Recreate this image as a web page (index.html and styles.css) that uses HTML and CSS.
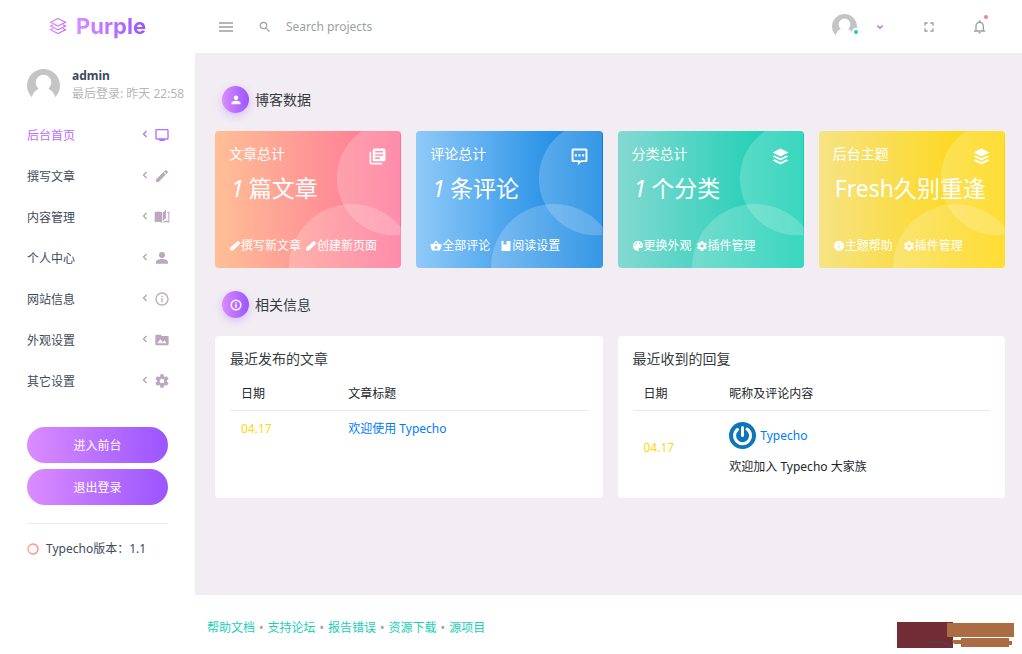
FILE: index.html
```html
<!DOCTYPE html>
<html lang="zh-CN">
<head>
<meta charset="utf-8">
<meta name="viewport" content="width=device-width, initial-scale=1">
<title>Purple</title>
<link rel="stylesheet" href="styles.css">
</head>
<body>
<svg class="sprite" aria-hidden="true">
  <defs>
    <linearGradient id="purple" x1="0" x2="1" y1="0" y2="0"><stop offset="0" stop-color="#da8cff"/><stop offset="1" stop-color="#b768ff"/></linearGradient>
    <linearGradient id="peach" x1="0" x2="1" y1="0" y2="0"><stop offset="0" stop-color="#ffa585"/><stop offset="1" stop-color="#fe7c96"/></linearGradient>
  </defs>
  <symbol id="i-pencil" viewBox="0 0 24 24"><path d="M20.71,7.04C21.1,6.65 21.1,6 20.71,5.63L18.37,3.29C18,2.9 17.35,2.9 16.96,3.29L15.12,5.12L18.87,8.87M3,17.25V21H6.75L17.81,9.93L14.06,6.18L3,17.25Z"/></symbol>
  <symbol id="i-pencil-bold" viewBox="0 0 24 24"><path d="M17,2.5Q18,1.5 19.5,3L21.5,5Q23,6.5 22,7.5L8,21H2V15.5Z"/></symbol>
  <symbol id="i-account" viewBox="0 0 24 24"><path d="M12,3A4.5,4.5 0 0,1 16.5,7.5A4.5,4.5 0 0,1 12,12A4.5,4.5 0 0,1 7.5,7.5A4.5,4.5 0 0,1 12,3M12,13.5C17,13.5 21,15.5 21,18V20.5H3V18C3,15.5 7,13.5 12,13.5Z"/></symbol>
  <symbol id="i-info" viewBox="0 0 24 24"><path d="M11,9H13V7H11M12,20C7.59,20 4,16.41 4,12C4,7.59 7.59,4 12,4C16.41,4 20,7.59 20,12C20,16.41 16.41,20 12,20M12,2A10,10 0 0,0 2,12A10,10 0 0,0 12,22A10,10 0 0,0 22,12A10,10 0 0,0 12,2M11,17H13V11H11V17Z"/></symbol>
  <symbol id="i-info-bold" viewBox="0 0 24 24"><path fill-rule="evenodd" d="M12,1A11,11 0 0,0 12,23A11,11 0 0,0 12,1ZM12,4A8,8 0 0,1 12,20A8,8 0 0,1 12,4ZM10.5,6.5H13.5V9H10.5ZM10.5,10.5H13.5V17.5H10.5Z"/></symbol>
  <symbol id="i-info-solid" viewBox="0 0 24 24"><path d="M13,9H11V7H13M13,17H11V11H13M12,2A10,10 0 0,0 2,12A10,10 0 0,0 12,22A10,10 0 0,0 22,12A10,10 0 0,0 12,2Z"/></symbol>
  <symbol id="i-gear" viewBox="0 0 24 24"><path d="M12,15.5A3.5,3.5 0 0,1 8.5,12A3.5,3.5 0 0,1 12,8.5A3.5,3.5 0 0,1 15.5,12A3.5,3.5 0 0,1 12,15.5M19.43,12.97C19.47,12.65 19.5,12.33 19.5,12C19.5,11.67 19.47,11.34 19.43,11L21.54,9.37C21.73,9.22 21.78,8.95 21.66,8.73L19.66,5.27C19.54,5.05 19.27,4.96 19.05,5.05L16.56,6.05C16.04,5.66 15.5,5.32 14.87,5.07L14.5,2.42C14.46,2.18 14.25,2 14,2H10C9.75,2 9.54,2.18 9.5,2.42L9.13,5.07C8.5,5.32 7.96,5.66 7.44,6.05L4.95,5.05C4.73,4.96 4.46,5.05 4.34,5.27L2.34,8.73C2.21,8.95 2.27,9.22 2.46,9.37L4.57,11C4.53,11.34 4.5,11.67 4.5,12C4.5,12.33 4.53,12.65 4.57,12.97L2.46,14.63C2.27,14.78 2.21,15.05 2.34,15.27L4.34,18.73C4.46,18.95 4.73,19.03 4.95,18.95L7.44,17.94C7.96,18.34 8.5,18.68 9.13,18.93L9.5,21.58C9.54,21.82 9.75,22 10,22H14C14.25,22 14.46,21.82 14.5,21.58L14.87,18.93C15.5,18.67 16.04,18.34 16.56,17.94L19.05,18.95C19.27,19.03 19.54,18.95 19.66,18.73L21.66,15.27C21.78,15.05 21.73,14.78 21.54,14.63L19.43,12.97Z"/></symbol>
  <symbol id="i-screen" viewBox="0 0 24 24"><path d="M20,17H4V5H20M20,3H4C2.9,3 2,3.9 2,5V17A2,2 0 0,0 4,19H8V21H16V19H20A2,2 0 0,0 22,17V5C22,3.9 21.1,3 20,3Z"/></symbol>
  <symbol id="i-book" viewBox="0 0 24 24"><path d="M1,4.5C4.5,3.2 8.5,3.2 12,5V20.5C8.5,18.8 4.5,18.8 1,20V4.5ZM13,5.5L18,1V13.5L13,18V5.5ZM19.5,4H23V20.5C19.5,19 16,19 13,20.5V19.5C16,17.4 18.5,17.4 21.5,18V5.5H19.5V4Z"/></symbol>
  <symbol id="i-folder" viewBox="0 0 24 24"><path d="M5,17L9.5,11L13,15.5L15.5,12.5L19,17M20,6H12L10,4H4A2,2 0 0,0 2,6V18A2,2 0 0,0 4,20H20A2,2 0 0,0 22,18V8A2,2 0 0,0 20,6Z"/></symbol>
  <symbol id="i-left" viewBox="0 0 24 24"><path d="M15,6L9,12L15,18" fill="none" stroke="currentColor" stroke-width="2.6"/></symbol>
  <symbol id="i-down" viewBox="0 0 24 24"><path d="M6.5,9L12,14.5L17.5,9" fill="none" stroke="currentColor" stroke-width="2.6"/></symbol>
  <symbol id="i-search" viewBox="0 0 24 24"><path d="M9.5,3A6.5,6.5 0 0,1 16,9.5C16,11.11 15.41,12.59 14.44,13.73L14.71,14H15.5L20.5,19L19,20.5L14,15.5V14.71L13.73,14.44C12.59,15.41 11.11,16 9.5,16A6.5,6.5 0 0,1 3,9.5A6.5,6.5 0 0,1 9.5,3M9.5,5C7,5 5,7 5,9.5C5,12 7,14 9.5,14C12,14 14,12 14,9.5C14,7 12,5 9.5,5Z"/></symbol>
  <symbol id="i-full" viewBox="0 0 24 24"><path d="M5,5H10V7H7V10H5V5M14,5H19V10H17V7H14V5M17,14H19V19H14V17H17V14M10,17V19H5V14H7V17H10Z"/></symbol>
  <symbol id="i-bell" viewBox="0 0 24 24"><path d="M16,17H7V10.5C7,8 9,6 11.5,6C14,6 16,8 16,10.5M18,16V10.5C18,7.43 15.86,4.86 13,4.18V3.5A1.5,1.5 0 0,0 10,3.5V4.18C7.13,4.86 5,7.43 5,10.5V16L3,18V19H20V18M11.5,22A2,2 0 0,0 13.5,20H9.5A2,2 0 0,0 11.5,22Z"/></symbol>
  <symbol id="i-stack" viewBox="0 0 24 24"><path d="M12,2L22,7L12,12L2,7ZM4.5,10.6L12,14.3L19.5,10.6L22,12L12,17L2,12ZM4.5,15.6L12,19.3L19.5,15.6L22,17L12,22L2,17Z"/></symbol>
  <symbol id="i-docs" viewBox="0 0 24 24"><path d="M20,2H8A2,2 0 0,0 6,4V16A2,2 0 0,0 8,18H20A2,2 0 0,0 22,16V4A2,2 0 0,0 20,2M19,7H9V5H19M15,15H9V13H15M19,11H9V9H19M4,6H2V20A2,2 0 0,0 4,22H18V20H4V6Z"/></symbol>
  <symbol id="i-chat" viewBox="0 0 24 24"><path fill-rule="evenodd" d="M4,2H20A2,2 0 0,1 22,4V17A2,2 0 0,1 20,19H14L10,23V19H4A2,2 0 0,1 2,17V4A2,2 0 0,1 4,2M4.4,4.4V16.6H12.4V18L14,16.6H19.6V4.4ZM6,9.3H8.6V12H6ZM10.7,9.3H13.3V12H10.7ZM15.4,9.3H18V12H15.4Z"/></symbol>
  <symbol id="i-basket" viewBox="0 0 24 24"><path fill-rule="evenodd" d="M12,1L18,8H23V11L20,21H4L1,11V8H6ZM12,4.5L9,8H15ZM12,12A3,3 0 0,0 12,18A3,3 0 0,0 12,12Z"/></symbol>
  <symbol id="i-notebook" viewBox="0 0 24 24"><path d="M3,2H7V10L10,8L13,10V2H21V22H3Z"/></symbol>
  <symbol id="i-palette" viewBox="0 0 24 24"><path fill-rule="evenodd" d="M12,2A10,10 0 0,0 2,12A10,10 0 0,0 12,22C14,22 14,20 13.3,18.8C12.5,17.5 13,16 14.5,16H17A5,5 0 0,0 22,11C22,6 17.5,2 12,2ZM6,9A1.5,1.5 0 0,1 6,12A1.5,1.5 0 0,1 6,9ZM9,5A1.5,1.5 0 0,1 9,8A1.5,1.5 0 0,1 9,5ZM15,5A1.5,1.5 0 0,1 15,8A1.5,1.5 0 0,1 15,5ZM18,9A1.5,1.5 0 0,1 18,12A1.5,1.5 0 0,1 18,9Z"/></symbol>
  <symbol id="i-avatar" viewBox="0 0 34 34"><path fill="#c4c4c4" d="M5,29A17,17 0 1,1 29,29C28,25 26,22 22,20.5C24,18.5 25,16.5 25,14A8,8 0 0,0 9,14C9,16.5 10,18.5 12,20.5C8,22 6,25 5,29Z"/></symbol>
  <symbol id="i-rings" viewBox="0 0 112 137"><path d="M111,0V104A57,57 0 0,1 73,0Z"/><circle cx="63" cy="136" r="63"/></symbol>
</svg>

<div class="app">
  <header class="topbar">
    <a class="brand" href="#">
      <svg class="brand-icon line-art" viewBox="0 0 24 24" stroke="url(#purple)" stroke-width="1.5"><path d="M12,2L22,7L12,12L2,7ZM5.5,10.2L2,12L12,17L22,12L18.5,10.2M5.5,15.2L2,17L12,22L22,17L18.5,15.2"/></svg>
      <span class="brand-name">Purple</span>
    </a>
    <div class="tools">
      <button class="icon-btn" type="button" aria-label="菜单"><svg class="menu-icon" viewBox="0 0 14 10"><path d="M0,1H14M0,5H14M0,9H14" stroke="currentColor" stroke-width="1.4"/></svg></button>
      <label class="search"><svg class="icon-sm"><use href="#i-search"/></svg><input type="text" placeholder="Search projects" aria-label="Search projects"></label>
      <button class="icon-btn profile" type="button" aria-label="admin">
        <span class="profile-face"><svg class="avatar-sm"><use href="#i-avatar"/></svg><i class="online"></i></span>
        <svg class="chevron"><use href="#i-down"/></svg>
      </button>
      <button class="icon-btn" type="button" aria-label="全屏"><svg class="icon"><use href="#i-full"/></svg></button>
      <button class="icon-btn bell" type="button" aria-label="通知"><svg class="icon"><use href="#i-bell"/></svg><i class="unread"></i></button>
    </div>
  </header>

  <aside class="sidebar">
    <div class="user">
      <svg class="avatar"><use href="#i-avatar"/></svg>
      <div class="user-text"><strong>admin</strong><span>最后登录: 昨天 22:58</span></div>
    </div>
    <nav class="menu">
      <a class="active" href="#">后台首页<svg class="chevron"><use href="#i-left"/></svg><svg class="icon"><use href="#i-screen"/></svg></a>
      <a href="#">撰写文章<svg class="chevron"><use href="#i-left"/></svg><svg class="icon"><use href="#i-pencil"/></svg></a>
      <a href="#">内容管理<svg class="chevron"><use href="#i-left"/></svg><svg class="icon"><use href="#i-book"/></svg></a>
      <a href="#">个人中心<svg class="chevron"><use href="#i-left"/></svg><svg class="icon"><use href="#i-account"/></svg></a>
      <a href="#">网站信息<svg class="chevron"><use href="#i-left"/></svg><svg class="icon"><use href="#i-info"/></svg></a>
      <a href="#">外观设置<svg class="chevron"><use href="#i-left"/></svg><svg class="icon"><use href="#i-folder"/></svg></a>
      <a href="#">其它设置<svg class="chevron"><use href="#i-left"/></svg><svg class="icon"><use href="#i-gear"/></svg></a>
    </nav>
    <div class="actions">
      <button type="button">进入前台</button>
      <button type="button">退出登录</button>
    </div>
    <p class="version"><svg class="ring line-art" viewBox="0 0 12 12"><circle cx="6" cy="6" r="5" stroke="url(#peach)" stroke-width="1.3"/></svg>Typecho版本：1.1</p>
  </aside>

  <main class="content">
    <h2 class="section-title"><span class="badge"><svg><use href="#i-account"/></svg></span>博客数据</h2>
    <section class="stats">
      <article class="stat peach">
        <svg class="rings"><use href="#i-rings"/></svg>
        <h3>文章总计<svg><use href="#i-docs"/></svg></h3>
        <p class="value"><em>1</em>篇文章</p>
        <p class="links"><a href="#"><svg><use href="#i-pencil-bold"/></svg>撰写新文章</a><a href="#"><svg><use href="#i-pencil-bold"/></svg>创建新页面</a></p>
      </article>
      <article class="stat blue">
        <svg class="rings"><use href="#i-rings"/></svg>
        <h3>评论总计<svg><use href="#i-chat"/></svg></h3>
        <p class="value"><em>1</em>条评论</p>
        <p class="links wide"><a href="#"><svg><use href="#i-basket"/></svg>全部评论</a><a href="#"><svg><use href="#i-notebook"/></svg>阅读设置</a></p>
      </article>
      <article class="stat green">
        <svg class="rings"><use href="#i-rings"/></svg>
        <h3>分类总计<svg><use href="#i-stack"/></svg></h3>
        <p class="value"><em>1</em>个分类</p>
        <p class="links"><a href="#"><svg><use href="#i-palette"/></svg>更换外观</a><a href="#"><svg><use href="#i-gear"/></svg>插件管理</a></p>
      </article>
      <article class="stat yellow">
        <svg class="rings"><use href="#i-rings"/></svg>
        <h3>后台主题<svg><use href="#i-stack"/></svg></h3>
        <p class="value">Fresh久别重逢</p>
        <p class="links wide"><a href="#"><svg><use href="#i-info-solid"/></svg>主题帮助</a><a href="#"><svg><use href="#i-gear"/></svg>插件管理</a></p>
      </article>
    </section>

    <h2 class="section-title"><span class="badge"><svg><use href="#i-info-bold"/></svg></span>相关信息</h2>
    <section class="panels">
      <article class="panel">
        <h3>最近发布的文章</h3>
        <table>
          <thead><tr><th class="col-date">日期</th><th>文章标题</th></tr></thead>
          <tbody><tr><td class="date">04.17</td><td><a href="#">欢迎使用 Typecho</a></td></tr></tbody>
        </table>
      </article>
      <article class="panel">
        <h3>最近收到的回复</h3>
        <table>
          <thead><tr><th class="col-date-narrow">日期</th><th>昵称及评论内容</th></tr></thead>
          <tbody><tr><td class="date">04.17</td><td>
            <a class="author" href="#"><svg viewBox="0 0 27 27"><circle cx="13.5" cy="13.5" r="13.5" fill="#0d75b8"/><path d="M8.5,7.5A8,8 0 1,0 18,7" fill="none" stroke="#fff" stroke-width="3" stroke-linecap="round"/><path d="M13.5,5.5V13.5" stroke="#fff" stroke-width="3" stroke-linecap="round"/></svg>Typecho</a>
            <p class="reply">欢迎加入 Typecho 大家族</p>
          </td></tr></tbody>
        </table>
      </article>
    </section>
  </main>

  <footer class="footer">
    <p><a href="#">帮助文档</a><span>•</span><a href="#">支持论坛</a><span>•</span><a href="#">报告错误</a><span>•</span><a href="#">资源下载</a><span>•</span><a href="#">源项目</a></p>
    <svg class="mark" viewBox="0 0 117 26" aria-hidden="true"><path fill="#722c35" d="M0,0H56V26H0Z"/><path fill="#ab6c43" d="M50,1H117V15H50ZM64,16H112V19H115V23H112V25H64V22H57L55,18H64Z"/><path d="M32,21Q44,17 55,25" fill="none" stroke="#4b4458"/></svg>
  </footer>
</div>
</body>
</html>
```
FILE: styles.css
```css
* { box-sizing: border-box; }

body {
  margin: 0;
  background: #fff;
  color: #343a40;
  font: 12px/18px "Noto Sans", "Noto Sans CJK SC", sans-serif;
}

h2, h3, p { margin: 0; font-weight: 400; }
a { color: inherit; text-decoration: none; }
svg { flex: none; fill: currentColor; }
.line-art { fill: none; }
.sprite { position: absolute; width: 0; height: 0; }
.icon { width: 16px; height: 16px; }
.icon-sm { width: 14px; height: 14px; }
.chevron { width: 12px; height: 12px; }

.app {
  display: grid;
  grid-template: 53px 1fr 59px / 195px 1fr;
  min-height: 100vh;
}

/* Top bar */
.topbar { grid-column: 1 / 3; display: grid; grid-template-columns: subgrid; align-items: center; }
.brand { display: flex; align-items: center; justify-content: center; gap: 9px; padding-bottom: 1px; }
.brand-icon { width: 18px; height: 18px; }
.brand-name {
  font: 700 22px/32px Inter, sans-serif;
  background: linear-gradient(to right, #da8cff, #9a55ff);
  -webkit-background-clip: text;
  background-clip: text;
  color: transparent;
}
.tools { display: flex; align-items: center; padding: 0 34px 0 24px; color: #9c9fa6; }
.icon-btn { display: flex; align-items: center; padding: 0; border: 0; background: none; color: inherit; }
.menu-icon { width: 14px; height: 10px; overflow: visible; }
.search { display: flex; flex: 1; align-items: center; gap: 14px; margin-left: 25px; }
.search input { flex: 1; min-width: 0; padding: 0; border: 0; outline: 0; background: none; font: inherit; color: inherit; }
.search input::placeholder { color: #9c9fa6; opacity: 1; }
.profile { gap: 17px; margin-right: 35px; }
.profile .chevron { color: #b66dff; }
.profile-face { position: relative; display: flex; }
.avatar-sm { width: 25px; height: 25px; }
.online, .unread { position: absolute; border-radius: 50%; }
.online { right: -3px; bottom: 3px; width: 8px; height: 8px; border: 2px solid #fff; background: #1bcfb4; }
.bell { position: relative; margin-left: 35px; }
.unread { right: 0; top: -4px; width: 4px; height: 4px; background: #fe7c96; }

/* Sidebar */
.sidebar { grid-row: 2 / 4; padding: 14px 0 0; }
.user { display: flex; align-items: center; gap: 12px; padding-left: 27px; white-space: nowrap; }
.avatar { width: 33px; height: 33px; }
.user-text { display: flex; flex-direction: column; color: #b8b6b8; }
.user-text strong { color: #3e4b5b; }
.menu { margin-top: 12px; }
.menu a { display: flex; align-items: center; height: 41px; padding: 0 25px 0 27px; color: #3e4b5b; }
.menu .chevron { margin: 0 3px 3px auto; color: #aaa6a8; }
.menu .icon { margin-bottom: 2px; color: #bba8bf; }
.menu .active, .menu .active svg { color: #b66dff; }
.actions { display: grid; gap: 6px; margin: 25px 27px 18px; }
.actions button {
  height: 36px;
  padding: 2px 0 0;
  border: 0;
  border-radius: 18px;
  background: linear-gradient(to right, #da8cff, #9a55ff);
  color: #fff;
  font: inherit;
}
.version { display: flex; align-items: center; gap: 7px; margin: 0 27px; padding-top: 16px; border-top: 1px solid #ebedf2; color: #3e4b5b; white-space: nowrap; }
.ring { width: 12px; height: 12px; }

/* Main area */
.content { padding: 33px 17px 33px 20px; background: #f2edf3; }
.section-title { display: flex; align-items: center; gap: 6px; padding-left: 7px; font-size: 14px; line-height: 26px; }
.badge {
  display: grid;
  place-items: center;
  width: 27px;
  height: 27px;
  border-radius: 50%;
  background: linear-gradient(to right, #da8cff, #9a55ff);
  box-shadow: 0 3px 8px rgba(154, 85, 255, .3);
  color: #fff;
}
.badge svg { width: 12px; height: 12px; }

.stats { display: grid; grid-template-columns: repeat(4, 1fr); gap: 15px; margin: 18px 0 23px; }
.stat { position: relative; display: flex; flex-direction: column; height: 137px; padding: 13px 14px; border-radius: 4px; overflow: hidden; color: #fff; }
.stat > :not(.rings) { position: relative; }
.peach { background: linear-gradient(to right, #ffbf96, #fe7096); }
.blue { background: linear-gradient(to right, #90caf9, #047edf 99%); }
.green { background: linear-gradient(to right, #84d9d2, #07cdae); }
.yellow { background: linear-gradient(to right, #f6e384, #ffd500); }
.stat .rings { position: absolute; top: 0; right: 0; width: 112px; height: 137px; fill: rgba(255, 255, 255, .2); }
.stat h3 { display: flex; justify-content: space-between; align-items: flex-start; height: 22px; font-size: 14px; line-height: 20px; }
.stat h3 svg { width: 19px; height: 19px; margin-top: 3px; }
.value { padding: 6px 0 0 2px; font-size: 23px; line-height: 32px; white-space: nowrap; }
.value em { margin-right: 5px; }
.links { display: flex; gap: 4px; margin-top: auto; white-space: nowrap; }
.links.wide { gap: 10px; }
.links a { display: flex; align-items: center; }
.links svg { width: 12px; height: 12px; }

.panels { display: grid; grid-template-columns: repeat(2, 1fr); gap: 15px; margin-top: 18px; }
.panel { min-height: 162px; padding: 14px 15px 12px; border-radius: 4px; background: #fff; }
.panel h3 { font-size: 14px; line-height: 18px; }
table { width: 100%; margin-top: 8px; border-collapse: collapse; color: #212529; table-layout: fixed; }
th, td { padding: 9px 11px 7px; text-align: left; font-weight: 400; }
th { border-bottom: 1px solid #ebe8f2; }
td a { color: #007bff; }
.col-date { width: 30%; }
.col-date-narrow { width: 24%; }
.date { color: #fed713; }
.author { display: flex; align-items: center; gap: 4px; margin-top: 2px; }
.author svg { width: 27px; height: 27px; }
.reply { margin-top: 9px; }

/* Footer */
.footer { display: flex; justify-content: space-between; align-items: flex-end; padding: 0 8px 6px 12px; color: #9c9fa6; }
.footer p { padding-bottom: 11px; }
.footer span { margin: 0 4px; }
.footer a { color: #1bcfb4; }
.mark { width: 117px; height: 26px; }
```
